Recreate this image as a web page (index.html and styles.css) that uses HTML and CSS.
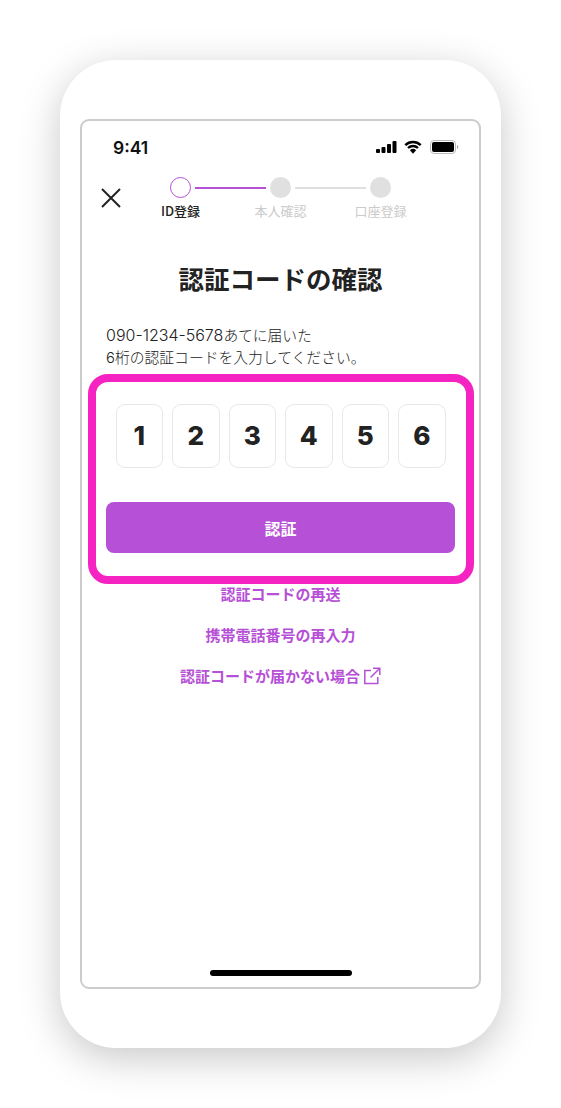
FILE: index.html
```html
<!DOCTYPE html>
<html lang="ja">
<head>
<meta charset="utf-8">
<title>認証コードの確認</title>
<link rel="stylesheet" href="styles.css">
</head>
<body>
<div class="phone">
  <main class="screen">
    <div class="status">
      <span class="time">9:41</span>
      <div class="status-icons">
        <svg class="signal" width="21" height="12" viewBox="0 0 21 12"><rect x="0" y="8" width="4" height="4" rx="1"/><rect x="5.500" y="6" width="4" height="6" rx="1"/><rect x="11" y="3" width="4" height="9" rx="1"/><rect x="16.500" y="0" width="4" height="12" rx="1"/></svg>
        <svg width="18" height="14" viewBox="0 0 18 14"><path d="M1.300 5.200A11 11 0 0 1 16.700 5.200M4 8A7.300 7.300 0 0 1 14 8" fill="none" stroke="#000" stroke-width="2.400"/><path d="M5.900 10.200a4.500 4.500 0 0 1 6.200 0L9 13.800z"/></svg>
        <svg width="29" height="14" viewBox="0 0 29 14"><rect x=".5" y=".5" width="25" height="13" rx="3.500" fill="none" stroke="#bbb"/><rect x="2" y="2" width="22" height="10" rx="2"/><path d="M27 5v4c.8-.3 1.300-1.100 1.300-2s-.5-1.700-1.300-2z" fill="#aaa"/></svg>
      </div>
    </div>
    <div class="nav">
      <svg class="close" width="20" height="20" viewBox="0 0 20 20"><path d="M1 1l18 18M19 1L1 19" fill="none" stroke="#222" stroke-width="2"/></svg>
      <ol class="steps">
        <li class="step current"><span class="dot"></span><span class="label">ID登録</span></li>
        <li class="line on"></li>
        <li class="step"><span class="dot"></span><span class="label">本人確認</span></li>
        <li class="line"></li>
        <li class="step"><span class="dot"></span><span class="label">口座登録</span></li>
      </ol>
    </div>
    <h1 class="title">認証コードの確認</h1>
    <p class="lead"><span class="tel">090-1234-5678</span>あてに届いた<br>6桁の認証コードを入力してください。</p>
    <section class="highlight">
      <div class="digits">
        <span class="digit">1</span>
        <span class="digit">2</span>
        <span class="digit">3</span>
        <span class="digit">4</span>
        <span class="digit">5</span>
        <span class="digit">6</span>
      </div>
      <button class="submit" type="button">認証</button>
    </section>
    <nav class="links">
      <a class="link">認証コードの再送</a>
      <a class="link">携帯電話番号の再入力</a>
      <a class="link">認証コードが届かない場合<svg class="ext" width="18" height="18" viewBox="0 0 18 18"><path d="M8 3.500H1.800v13h13V10M10 1.200h6.800V8M16.500 1.500L7.500 10.500" fill="none" stroke="#b650d6" stroke-width="1.500"/></svg></a>
    </nav>
    <div class="home"></div>
  </main>
</div>
</body>
</html>
```
FILE: styles.css
```css
* { box-sizing: border-box; }
html, body { margin: 0; padding: 0; background: #fff; }
body {
  width: 561px;
  height: 1108px;
  overflow: hidden;
  padding: 60px 60px 0;
  font-family: "Noto Sans CJK JP", "Noto Sans", sans-serif;
  color: #222;
}
.phone {
  width: 441px;
  height: 988px;
  padding: 59px 20px;
  background: #fff;
  border-radius: 56px;
  box-shadow: 0 10px 40px rgba(0, 0, 0, 0.22);
}
.screen {
  width: 401px;
  height: 870px;
  padding: 0 24px;
  border: 2px solid #ccc;
  border-radius: 9px;
  display: flex;
  flex-direction: column;
  background: #fff;
}
.status {
  height: 52px;
  flex: none;
  display: flex;
  justify-content: space-between;
  align-items: center;
  padding: 0 0 0 7px;
  margin-right: -4px;
}
.time {
  font-family: Inter, sans-serif;
  font-weight: 600;
  font-size: 17.500px;
  color: #111;
}
.status-icons { display: flex; align-items: center; gap: 8px; }
.status-icons svg { display: block; }
.status-icons .signal { margin-right: -1px; }
.nav {
  display: flex;
  height: 52px;
  flex: none;
  position: relative;
  margin-left: -5px;
}
.close { margin-top: 15px; flex: none; }
.steps {
  list-style: none;
  margin: 0 0 0 49px;
  padding: 0;
  display: flex;
  align-items: flex-start;
}
.step {
  width: 21px;
  flex: none;
  display: flex;
  flex-direction: column;
  align-items: center;
  margin-top: 4px;
}
.dot {
  width: 21px;
  height: 21px;
  border-radius: 50%;
  background: #e0e0e0;
  flex: none;
}
.current .dot { background: #fff; border: 1.5px solid #b650d6; }
.label {
  font-size: 13px;
  line-height: 18px;
  margin-top: 4px;
  white-space: nowrap;
  color: #cbcbcb;
}
.current .label { color: #222; font-weight: 500; }
.line {
  width: 71px;
  height: 2px;
  margin: 13.500px 4px 0;
  background: #e0e0e0;
  flex: none;
}
.line.on { background: #b650d6; }
.title {
  margin: 35px 0 0;
  font-size: 25.500px;
  line-height: 36px;
  font-weight: 700;
  text-align: center;
  color: #222;
  flex: none;
}
.lead {
  margin: 29px 0 0;
  font-family: Inter, "Noto Sans CJK JP", sans-serif;
  font-size: 14.800px;
  font-weight: 300;
  line-height: 22px;
  color: #222;
  flex: none;
}
.tel { font-size: 16px; line-height: 20px; }
.highlight {
  margin: 5px -18.500px 0;
  height: 210px;
  flex: none;
  border: 8px solid #f423c2;
  border-radius: 20px;
  background: #fff;
  padding: 22px 10.500px 0;
  display: flex;
  flex-direction: column;
}
.digits {
  display: flex;
  justify-content: space-between;
  padding: 0 9.500px 0 9.500px;
}
.digit {
  width: 47.500px;
  height: 64px;
  padding-bottom: 2px;
  border: 1.500px solid #e8e8e8;
  border-radius: 9px;
  display: flex;
  align-items: center;
  justify-content: center;
  font-family: Inter, sans-serif;
  font-weight: 800;
  font-size: 26px;
  color: #222;
}
.submit {
  margin-top: 34px;
  height: 51px;
  width: 349px;
  border: 0;
  border-radius: 8px;
  background: #b650d6;
  color: #fff;
  font-family: inherit;
  font-size: 16px;
  font-weight: 700;
}
.links {
  display: flex;
  flex-direction: column;
  align-items: center;
  gap: 19px;
  margin-top: -1px;
  flex: none;
}
.link {
  display: flex;
  align-items: center;
  gap: 2px;
  font-size: 15px;
  line-height: 22px;
  font-weight: 700;
  color: #b650d6;
}
.ext { flex: none; margin-left: 1px; }
.home {
  width: 142px;
  height: 6px;
  border-radius: 3px;
  background: #000;
  margin: auto auto 0;
  position: relative;
  top: -11px;
  flex: none;
}
```
